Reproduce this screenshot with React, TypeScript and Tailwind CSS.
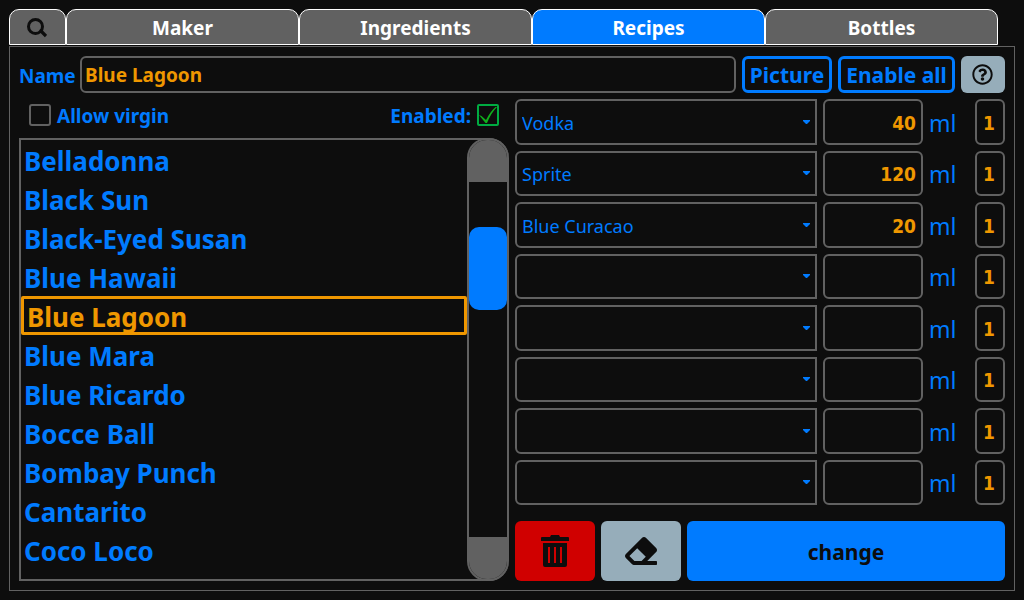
import { useState } from 'react';
import { FaEraser, FaRegQuestionCircle } from 'react-icons/fa';

const tabs = ["Maker", "Ingredients", "Recipes", "Bottles"];

const recipes = [
  "Belladonna",
  "Black Sun",
  "Black-Eyed Susan",
  "Blue Hawaii",
  "Blue Lagoon",
  "Blue Mara",
  "Blue Ricardo",
  "Bocce Ball",
  "Bombay Punch",
  "Cantarito",
  "Coco Loco",
];

const ingredients = [
  { name: "Vodka", amount: "40" },
  { name: "Sprite", amount: "120" },
  { name: "Blue Curacao", amount: "20" },
  { name: "", amount: "" },
  { name: "", amount: "" },
  { name: "", amount: "" },
  { name: "", amount: "" },
  { name: "", amount: "" },
];

const TabBar = () => {
  const [active, setActive] = useState("Recipes");

  return (
    <nav className="flex h-9 pr-[17px]">
      <button
        aria-label="Search"
        className="flex w-[57px] items-center justify-center rounded-t-[10px] border border-white bg-[#616161] pt-0.5 pr-0.5 text-[#0d0d0d]"
      >
        <svg viewBox="0 0 20 20" className="h-5 w-5" fill="none" stroke="currentColor">
          <circle cx="8.5" cy="8.5" r="7" strokeWidth="3" />
          <path d="M12.5 12.5 L14 13 L19 18" strokeWidth="3.2" />
        </svg>
      </button>
      {tabs.map((tab) => (
        <button
          key={tab}
          onClick={() => setActive(tab)}
          className={`flex-1 rounded-t-[10px] border border-white pt-0.5 text-[19px] leading-7 font-bold text-white ${
            tab === active ? "bg-[#007bff]" : "bg-[#616161]"
          }`}
        >
          {tab}
        </button>
      ))}
    </nav>
  );
};

const NameRow = () => {
  return (
    <div className="flex h-[37px] items-stretch gap-1.5">
      <label htmlFor="name" className="w-[55px] self-center pt-0.5 text-[19px] leading-7 font-bold">Name</label>
      <input
        id="name"
        type="text"
        defaultValue="Blue Lagoon"
        className="min-w-0 flex-1 rounded-md border-2 border-[#616161] bg-transparent px-[3px] pt-0.5 text-[19px] font-bold text-[#ef9700] outline-none"
      />
      <button className="w-[90px] rounded-md border-3 border-[#007bff] pt-0.5 text-[21px] leading-none font-bold">Picture</button>
      <button className="w-[117px] rounded-md border-3 border-[#007bff] pt-0.5 text-[21px] leading-none font-bold">Enable all</button>
      <button aria-label="Help" className="flex w-11 items-center justify-center rounded-md bg-[#96adba] pr-px pb-px text-[#0d0d0d]">
        <FaRegQuestionCircle className="h-[21px] w-[21px]" />
      </button>
    </div>
  );
};

const CheckRow = () => {
  return (
    <div className="flex h-8 items-center justify-between px-2.5 text-[19px] leading-7 font-bold">
      <label className="flex items-center gap-1.5">
        <input
          type="checkbox"
          className="h-[22px] w-[22px] appearance-none rounded-[3px] border-2 border-[#616161]"
        />
        <span className="pt-0.5">Allow virgin</span>
      </label>
      <label className="flex items-center gap-1.5">
        <span className="pt-0.5">Enabled:</span>
        <span className="grid h-[22px] w-[22px]">
          <input
            type="checkbox"
            defaultChecked
            className="peer col-start-1 row-start-1 appearance-none rounded-[2px] border-2 border-[#616161] checked:border-[#00ab41]"
          />
          <svg
            viewBox="0 0 22 22"
            className="pointer-events-none col-start-1 row-start-1 hidden h-[22px] w-[22px] peer-checked:block"
          >
            <path d="M2 11 L4.5 12 L9 16 Q13 8 18.5 3 L20 3 Q14 9 10 19 L8.5 19 Z" fill="#0fb01c" />
          </svg>
        </span>
      </label>
    </div>
  );
};

const RecipeList = () => {
  const [selected, setSelected] = useState("Blue Lagoon");

  return (
    <div className="flex flex-1 rounded-r-[20px] border-2 border-r-0 border-[#616161]">
      <ul className="min-w-0 flex-1">
        {recipes.map((recipe) => (
          <li key={recipe}>
            <button
              onClick={() => setSelected(recipe)}
              className={`flex h-[39px] w-full items-center px-[3px] pt-0.5 text-[26px] leading-8 font-bold ${
                recipe === selected ? "rounded-[2px] border-3 border-[#ef9700] text-[#ef9700]" : ""
              }`}
            >
              {recipe}
            </button>
          </li>
        ))}
      </ul>
      <div className="-my-0.5 flex w-[42px] flex-col overflow-hidden rounded-[20px] border-2 border-[#616161]">
        <div className="h-[42px] bg-[#616161]" />
        <div className="flex-1 pt-[45px]">
          <div className="h-[83px] rounded-[10px] bg-[#007bff]" />
        </div>
        <div className="h-[42px] bg-[#616161]" />
      </div>
    </div>
  );
};

const IngredientRow = ({ name, amount, index }: { name: string; amount: string; index: number }) => {
  return (
    <div className="flex flex-1 items-stretch gap-1.5">
      <div className="grid min-w-0 flex-1 items-center">
        <select
          aria-label={`Ingredient ${index}`}
          defaultValue={name}
          className="col-start-1 row-start-1 h-full w-full appearance-none rounded-l-md border-2 border-[#616161] bg-[#0d0d0d] px-[5px] pt-0.5 text-lg outline-none"
        >
          <option value={name}>{name}</option>
        </select>
        <svg viewBox="0 0 7 4" className="pointer-events-none col-start-1 row-start-1 mr-[7px] h-1 w-[7px] justify-self-end">
          <path d="M0 0 H7 V1 L4 4 H3 L0 1 Z" fill="#007bff" />
        </svg>
      </div>
      <input
        type="text"
        aria-label={`Amount ${index}`}
        defaultValue={amount}
        className="w-[100px] rounded-md border-2 border-[#616161] bg-transparent px-[5px] pt-0.5 text-right font-['DejaVu_Sans_Condensed','Noto_Sans',sans-serif] text-[19px] font-bold text-[#ef9700] outline-none"
      />
      <span className="w-10 self-center pt-0.5 text-[23px] leading-8">ml</span>
      <input
        type="text"
        aria-label={`Order ${index}`}
        defaultValue="1"
        className="w-[30px] rounded-md border-2 border-[#616161] bg-transparent pt-0.5 pr-0.5 text-center font-['DejaVu_Sans_Condensed','Noto_Sans',sans-serif] text-[19px] font-bold text-[#ef9700] outline-none"
      />
    </div>
  );
};

const TrashIcon = () => {
  return (
    <svg viewBox="0 0 28 32" className="h-8 w-7" fill="currentColor">
      <path d="M1 2 H9 L10 0 H18 L19 2 H27 Q28 2 28 3 V6 H0 V3 Q0 2 1 2 Z" />
      <path
        fillRule="evenodd"
        d="M2 8 H26 V30 Q26 32 24 32 H4 Q2 32 2 30 Z M7 12 V28 H9 V12 Z M13 12 V28 H15 V12 Z M19 12 V28 H21 V12 Z"
      />
    </svg>
  );
};

const Actions = () => {
  return (
    <div className="mt-2.5 flex h-[60px] gap-1.5 text-[#0d0d0d]">
      <button aria-label="Delete" className="flex w-20 items-center justify-center rounded-md bg-[#d00000]">
        <TrashIcon />
      </button>
      <button aria-label="Clear" className="flex w-20 items-center justify-center rounded-md bg-[#96adba]">
        <FaEraser className="h-8 w-8" />
      </button>
      <button className="flex-1 rounded-md bg-[#007bff] pt-0.5 text-[21px] leading-7 font-bold">change</button>
    </div>
  );
};

const App = () => {
  return (
    <div className="flex min-h-screen flex-col bg-[#0d0d0d] p-[9px] font-['Noto_Sans',sans-serif] text-[#007bff]">
      <TabBar />
      <main className="mt-px flex flex-1 flex-col gap-1.5 border border-[#616161] p-[9px]">
        <NameRow />
        <div className="grid flex-1 grid-cols-2 gap-1.5">
          <section className="flex min-w-0 flex-col gap-[7px]">
            <CheckRow />
            <RecipeList />
          </section>
          <section className="flex min-w-0 flex-col gap-1.5">
            {ingredients.map((item, i) => (
              <IngredientRow key={i} index={i + 1} name={item.name} amount={item.amount} />
            ))}
            <Actions />
          </section>
        </div>
      </main>
    </div>
  );
};

export default App;
